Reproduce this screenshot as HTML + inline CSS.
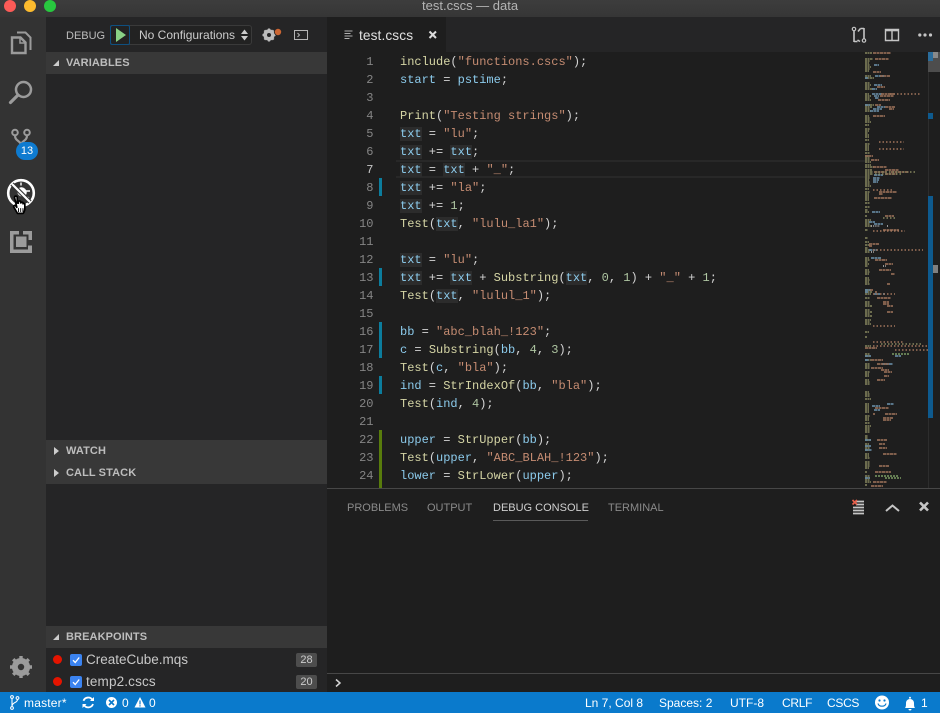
<!DOCTYPE html>
<html><head><meta charset="utf-8">
<style>
html,body{margin:0;padding:0;width:940px;height:713px;overflow:hidden;background:#1e1e1e}
*{box-sizing:border-box}
body{font-family:"Liberation Sans",sans-serif;position:relative}
svg{display:block}
.a{position:absolute}
.t{position:absolute;white-space:pre;line-height:16px}
.hd{position:absolute;left:46px;width:281px;height:22px;background:#383838;color:#bdbdbd;font:bold 11px/23px "Liberation Sans",sans-serif;padding-left:20px;letter-spacing:.1px}
.tri-d{position:absolute;left:7px;top:8px;width:0;height:0;border-style:solid;border-width:0 0 6px 6px;border-color:transparent transparent #ccc transparent}
.tri-r{position:absolute;left:8px;top:7px;width:0;height:0;border-style:solid;border-width:4px 0 4px 5px;border-color:transparent transparent transparent #ccc}
#code{position:absolute;left:400px;top:53px;width:462px;height:435px;overflow:hidden;font:12px/18px "Liberation Mono",monospace;color:#d4d4d4}
#code div{height:18px;white-space:pre}
#code div.last{height:3px;overflow:hidden}
#nums{position:absolute;left:340px;top:53px;width:33.5px;height:435px;overflow:hidden;font:12px/18px "Liberation Mono",monospace;color:#858585;text-align:right}
#nums div{height:18px}
i{font-style:normal}
.f{color:#d5d5a5}.v{color:#8ccbec}.s{color:#c58c72}.n{color:#afc6a2}
.h{background:#2c2c2c;}
.mk{position:absolute;left:379px;width:3px}
.st{position:absolute;top:693px;height:20px;line-height:20px;font-size:12px;color:#fff;white-space:pre}
.bg{position:absolute;left:296px;width:21px;height:14px;background:#4d4d4d;color:#ccc;font-size:11px;line-height:14px;text-align:center;border-radius:2px}
.cb{position:absolute;left:70px;width:12px;height:12px;background:#3b83f0;border-radius:2px}
.dot{position:absolute;left:53px;width:9px;height:9px;border-radius:50%;background:#e51400}
.pt{position:absolute;font-size:11px;line-height:16px;color:#8a8a8a;white-space:pre}
</style></head><body>

<!-- title bar -->
<div class="a" style="left:0;top:0;width:940px;height:17px;background:linear-gradient(#3d3d3d,#363636)"></div>
<div class="a" style="left:4px;top:0;width:12px;height:12px;border-radius:50%;background:#fc5b57"></div>
<div class="a" style="left:24px;top:0;width:12px;height:12px;border-radius:50%;background:#fdbc2e"></div>
<div class="a" style="left:44px;top:0;width:12px;height:12px;border-radius:50%;background:#28c83f"></div>
<div class="t" style="left:422px;top:-2px;font-size:13px;color:#b4b4b4;line-height:16px">test.cscs — data</div>

<!-- activity bar -->
<div class="a" style="left:0;top:17px;width:46px;height:675px;background:#333"></div>
<svg class="a" style="left:0;top:17px" width="46" height="675" viewBox="0 17 46 675" fill="none">
 <!-- files -->
 <path d="M17 32.500h8.500l5 5V50" stroke="#9b9b9b" stroke-width="2"/>
 <path d="M12 37.500h8.500l5 5v10.500H12z" stroke="#9b9b9b" stroke-width="2.400" fill="#333"/>
 <path d="M20 37.500v5.500h5.500" stroke="#9b9b9b" stroke-width="1.500"/>
 <!-- search -->
 <circle cx="23.500" cy="89.500" r="7.500" stroke="#9b9b9b" stroke-width="2.500"/>
 <path d="M17.500 95.500 10.500 102.500" stroke="#9b9b9b" stroke-width="3.200" stroke-linecap="round"/>
 <!-- scm -->
 <circle cx="15" cy="132.500" r="2.800" stroke="#9b9b9b" stroke-width="2"/>
 <circle cx="27" cy="132.500" r="2.800" stroke="#9b9b9b" stroke-width="2"/>
 <path d="M15 135.500c0 6 6 5 6 10M27 135.500c0 6-6 5-6 10" stroke="#9b9b9b" stroke-width="2.200"/>
 <!-- debug -->
 <circle cx="21" cy="193" r="12.800" stroke="#fff" stroke-width="2.600" fill="#333"/>
 <path d="M21 185.500v-3M26 191h4M25 196l4 2M16.500 187l-2-2" stroke="#fff" stroke-width="1.400"/>
 <ellipse cx="22" cy="192" rx="4.500" ry="5" fill="#fff" transform="rotate(-45 22 192)"/>
 <path d="M12 184 30 202" stroke="#333" stroke-width="4.400"/>
 <path d="M12 184 30 202" stroke="#fff" stroke-width="2.200"/>
 <!-- hand cursor -->
 <g transform="translate(-4.500,-21.500) scale(1.120)">
 <path d="M17 195.500c0-1.600 2.400-1.600 2.400 0v5l1 .1v-1.200c0-1 2-1 2.100 0l.1 1c.3-.9 2-.8 2 .2l0 .6c.4-.6 1.600-.4 1.600.5v4c0 1.500-.8 3-1.400 4h-5.200l-3.100-5.400c-.8-1.200.8-2.300 1.600-1.200l.9 1.200z" fill="#fff" stroke="#000" stroke-width="1.500" stroke-linejoin="round"/>
 <path d="M20.500 205v3.500M22.500 205v3.500M24.500 205v3.500" stroke="#000" stroke-width=".8"/>
 </g>
 <!-- extensions -->
 <path d="M10 231h9v3.500h-5.500v15H28v-4h4V253H10z" fill="#9b9b9b"/>
 <path d="M23 231h9v9h-3.500v-5.500H23z" fill="#9b9b9b"/>
 <rect x="16" y="236.500" width="10.500" height="10.500" fill="#9b9b9b"/>
 <!-- gear -->
 <circle cx="21" cy="667" r="6.800" stroke="#9b9b9b" stroke-width="4.500"/>
 <path d="M21 656v22M10 667h22M13.200 659.200l15.600 15.600M28.800 659.200l-15.600 15.600" stroke="#9b9b9b" stroke-width="3.400"/>
 <circle cx="21" cy="667" r="3.200" fill="#333"/>
</svg>
<div class="a" style="left:16px;top:142px;width:22px;height:18px;border-radius:9px;background:#0e7bd0;color:#fff;font-size:11px;line-height:18px;text-align:center">13</div>

<!-- sidebar -->
<div class="a" style="left:46px;top:17px;width:281px;height:675px;background:#252526"></div>
<div class="t" style="left:66px;top:28px;font-size:11px;color:#bcbcbc">DEBUG</div>
<div class="a" style="left:110px;top:25px;width:142px;height:20px;border:1px solid #3a3a3a;border-radius:3px;background:#222"></div>
<div class="a" style="left:110px;top:25px;width:20px;height:20px;border:1px solid #0e4f7f;border-radius:2px"></div>
<svg class="a" style="left:110px;top:25px" width="20" height="20"><path d="M6 3v14l10-7z" fill="#89d185"/></svg>
<div class="t" style="left:139px;top:27px;font-size:12px;color:#ccc">No Configurations</div>
<svg class="a" style="left:240px;top:29px" width="10" height="12"><path d="M1 5 4.500 .5 8 5zM1 7l3.500 4.500L8 7z" fill="#ccc"/></svg>
<svg class="a" style="left:260px;top:26px" width="24" height="18" fill="none">
 <circle cx="9" cy="9" r="4.200" stroke="#bcbcbc" stroke-width="3"/>
 <path d="M9 2.500v13M2.500 9h13M4.400 4.400l9.200 9.200M13.600 4.400l-9.200 9.200" stroke="#bcbcbc" stroke-width="2.200"/>
 <circle cx="9" cy="9" r="2" fill="#252526"/>
 <circle cx="18" cy="6" r="4" fill="#252526"/><circle cx="18" cy="6" r="3.200" fill="#cc6633"/>
</svg>
<svg class="a" style="left:294px;top:29px" width="15" height="12" fill="none"><rect x=".5" y="1.500" width="13" height="9" stroke="#b5b5b5"/><path d="M3.500 4l2 2-2 2" stroke="#b5b5b5"/></svg>

<div class="hd" style="top:52px"><span class="tri-d"></span>VARIABLES</div>
<div class="hd" style="top:440px"><span class="tri-r"></span>WATCH</div>
<div class="hd" style="top:462px"><span class="tri-r"></span>CALL STACK</div>
<div class="hd" style="top:626px"><span class="tri-d"></span>BREAKPOINTS</div>

<div class="dot" style="top:655px"></div>
<div class="cb" style="top:654px"></div>
<svg class="a" style="left:70px;top:654px" width="12" height="12" fill="none"><path d="M3 6.200 5.200 8.500 9.200 3.500" stroke="#fff" stroke-width="1.300"/></svg>
<div class="t" style="left:86px;top:652px;font-size:13.500px;color:#c8c8c8">CreateCube.mqs</div>
<div class="bg" style="top:653px">28</div>
<div class="dot" style="top:677px"></div>
<div class="cb" style="top:676px"></div>
<svg class="a" style="left:70px;top:676px" width="12" height="12" fill="none"><path d="M3 6.200 5.200 8.500 9.200 3.500" stroke="#fff" stroke-width="1.300"/></svg>
<div class="t" style="left:86px;top:674px;font-size:13.500px;letter-spacing:.15px;color:#c8c8c8">temp2.cscs</div>
<div class="bg" style="top:675px">20</div>

<!-- tab bar -->
<div class="a" style="left:327px;top:17px;width:613px;height:35px;background:#252526"></div>
<div class="a" style="left:327px;top:17px;width:119px;height:35px;background:#1e1e1e"></div>
<svg class="a" style="left:344px;top:30px" width="10" height="10" fill="none"><path d="M.5 1h8M.5 3.500h6M.5 6h8M.5 8.500h5" stroke="#b0b0b0" stroke-width="1"/></svg>
<div class="t" style="left:359px;top:28px;font-size:13.700px;letter-spacing:.1px;color:#e0e0e0">test.cscs</div>
<svg class="a" style="left:428px;top:30px" width="10" height="10" fill="none"><path d="M1.500 1.500l6.500 6.500M8 1.500 1.500 8" stroke="#ddd" stroke-width="2"/></svg>
<svg class="a" style="left:850px;top:25px" width="50" height="20" fill="none">
 <circle cx="4" cy="4" r="1.700" stroke="#c5c5c5" stroke-width="1.200"/>
 <circle cx="14" cy="15.500" r="1.700" stroke="#c5c5c5" stroke-width="1.200"/>
 <path d="M4 6v11M14 13.500V3M8 6.500l2.500-3M10.500 3.500H14M10 16.500 7.500 15M4 16.500H7.500" stroke="#c5c5c5" stroke-width="1.600"/>
 <path d="M35.500 4.500h13v11h-13zM42 4.500v11" stroke="#c5c5c5" stroke-width="1.400"/>
 <path d="M35.500 5.300h13" stroke="#c5c5c5" stroke-width="2"/>
</svg>
<svg class="a" style="left:918px;top:30px" width="18" height="10"><circle cx="1.800" cy="5" r="1.600" fill="#c5c5c5"/><circle cx="7" cy="5" r="1.600" fill="#c5c5c5"/><circle cx="12.500" cy="5" r="1.600" fill="#c5c5c5"/></svg>

<!-- editor -->
<div class="a" style="left:327px;top:52px;width:613px;height:436px;background:#1e1e1e"></div>
<div class="a" style="left:396px;top:160px;width:469px;height:18px;border-top:2px solid #282828;border-bottom:2px solid #282828"></div>
<div class="mk" style="top:178px;height:18px;background:#0c7d9d"></div>
<div class="mk" style="top:268px;height:18px;background:#0c7d9d"></div>
<div class="mk" style="top:322px;height:36px;background:#0c7d9d"></div>
<div class="mk" style="top:376px;height:18px;background:#0c7d9d"></div>
<div class="mk" style="top:430px;height:58px;background:#587c0c"></div>

<div id="nums"><div>1</div><div>2</div><div>3</div><div>4</div><div>5</div><div>6</div><div style="color:#c6c6c6">7</div><div>8</div><div>9</div><div>10</div><div>11</div><div>12</div><div>13</div><div>14</div><div>15</div><div>16</div><div>17</div><div>18</div><div>19</div><div>20</div><div>21</div><div>22</div><div>23</div><div>24</div></div>

<div id="code"><div><i class="f">include</i>(<i class="s">"functions.cscs"</i>);</div><div><i class="v">start</i> = <i class="v">pstime</i>;</div><div></div><div><i class="f">Print</i>(<i class="s">"Testing strings"</i>);</div><div><i class="v h">txt</i> = <i class="s">"lu"</i>;</div><div><i class="v h">txt</i> += <i class="v h">txt</i>;</div><div><i class="v h">txt</i> = <i class="v h">txt</i> + <i class="s">"_"</i>;</div><div><i class="v h">txt</i> += <i class="s">"la"</i>;</div><div><i class="v h">txt</i> += <i class="n">1</i>;</div><div><i class="f">Test</i>(<i class="v h">txt</i>, <i class="s">"lulu_la1"</i>);</div><div></div><div><i class="v h">txt</i> = <i class="s">"lu"</i>;</div><div><i class="v h">txt</i> += <i class="v h">txt</i> + <i class="f">Substring</i>(<i class="v h">txt</i>, <i class="n">0</i>, <i class="n">1</i>) + <i class="s">"_"</i> + <i class="n">1</i>;</div><div><i class="f">Test</i>(<i class="v h">txt</i>, <i class="s">"lulul_1"</i>);</div><div></div><div><i class="v">bb</i> = <i class="s">"abc_blah_!123"</i>;</div><div><i class="v">c</i> = <i class="f">Substring</i>(<i class="v">bb</i>, <i class="n">4</i>, <i class="n">3</i>);</div><div><i class="f">Test</i>(<i class="v">c</i>, <i class="s">"bla"</i>);</div><div><i class="v">ind</i> = <i class="f">StrIndexOf</i>(<i class="v">bb</i>, <i class="s">"bla"</i>);</div><div><i class="f">Test</i>(<i class="v">ind</i>, <i class="n">4</i>);</div><div></div><div><i class="v">upper</i> = <i class="f">StrUpper</i>(<i class="v">bb</i>);</div><div><i class="f">Test</i>(<i class="v">upper</i>, <i class="s">"ABC_BLAH_!123"</i>);</div><div><i class="v">lower</i> = <i class="f">StrLower</i>(<i class="v">upper</i>);</div><div class="last"><i class="f">Test</i>(<i class="v">lower</i>, <i class="s">"abc_blah_!123"</i>);</div></div>

<!-- minimap -->
<svg class="a" style="left:865px;top:52px" width="63" height="436" fill="none" stroke-width="1.600">
 <path stroke="#85855f" stroke-dasharray="2 .5" d="M0 1h7M0 7h8M0 9h5M0 11h4M0 13h5M0 15h6M0 17h5M0 19h4M0 24h6M0 26h9M0 31h5M0 33h6M0 35h5M0 37h8M0 42h4M0 44h6M0 46h5M0 48h6M0 53h9M0 55h7M0 57h5M0 59h6M0 64h4M0 66h5M0 68h5M0 70h6M0 73h4M0 77h5M0 79h4M0 81h3M0 83h4M0 85h4M0 88h4M0 92h5M0 94h4M0 96h4M0 98h4M0 101h5M0 104h4M0 106h5M0 108h5M0 110h6M0 113h6M0 115h9M0 118h7M0 120h8M0 122h8M0 124h5M0 126h5M0 128h4M0 130h5M0 132h5M0 134h6M0 137h4M0 140h5M0 142h4M0 144h4M0 146h4M0 148h4M0 151h5M0 155h5M0 158h3M0 160h4M0 164h2M0 168h6M0 170h4M0 172h5M0 174h6M0 178h3M0 186h3M0 190h4M0 193h5M0 196h3M0 198h6M0 200h5M0 206h4M0 208h5M0 210h3M0 212h4M0 214h3M0 218h4M0 220h5M0 222h4M0 226h4M0 228h5M0 230h4M0 232h5M0 238h5M0 240h7M0 242h6M0 246h5M0 250h5M0 252h5M0 254h7M0 258h5M0 260h7M0 262h5M0 264h7M0 268h6M0 270h5M0 272h6M0 280h4M0 285h2M0 294h6M0 302h5M0 304h5M0 308h6M0 312h5M0 314h5M0 316h5M0 320h5M0 322h4M0 324h4M0 328h4M0 330h5M0 332h5M0 340h4M0 342h5M0 344h5M0 347h6M0 352h4M0 354h4M0 356h4M0 358h4M0 360h4M0 364h5M0 366h4M0 368h4M0 371h5M0 374h6M0 376h5M0 378h5M0 380h5M0 384h3M0 386h3M0 388h6M0 392h4M0 394h4M0 396h5M0 398h4M0 402h4M0 404h4M0 406h5M0 410h5M0 412h5M0 414h5M0 416h4M0 420h2M0 424h5M0 426h5M0 428h5M0 430h6M0 433h2"/>
 <path stroke="#6d93ad" stroke-dasharray="3 .5" d="M9 13h5M10 24h9M0 26h3M9 33h8M7 37h5M7 42h10M9 44h5M10 46h4M0 53h5M12 55h8M8 57h9M5 59h9M9 123h9M8 126h7M8 128h6M8 130h5M7 160h8M4 170h6M9 172h9M4 198h8M6 206h10M0 238h6M0 240h3M9 242h6M18 242h2M0 304h6M30 304h6M0 308h4M17 312h11M22 352h7M7 354h8M9 358h6M0 388h6M0 394h6M0 398h7M0 426h5"/>
 <path stroke="#a0755c" stroke-dasharray="3 .5" d="M8 1h18M10 7h14M8 20h8M15 24h10M12 35h8M16 42h14M15 44h14M13 48h12M10 53h6M20 55h10M24 57h5M8 64h12M0 104h8M6 108h8M9 120h12M26 120h18M8 115h14M20 118h14M20 122h12M14 140h18M14 142h4M9 146h18M20 164h9M18 178h16M4 192h10M4 194h3M10 208h12M14 218h12M20 212h8M26 222h4M5 238h3M22 232h3M10 240h2M12 246h14M18 250h6M18 252h6M22 254h6M22 260h6M0 296h12M6 308h12M12 312h12M6 316h12M16 318h8M19 320h8M19 324h5M12 328h8M10 356h14M8 362h2M20 362h12M18 366h10M18 368h8M12 388h10M14 392h6M14 396h8M18 402h14M14 414h10M10 420h16M8 430h14M6 434h12"/>
 <path stroke="#7b9c63" stroke-dasharray="2 1" d="M27 302h18M10 424h24M20 426h16"/>
 <path stroke="#bdbdbd" stroke-dasharray="1 1.200" d="M6 174h9M22 174h2M18 214h3M6 200h3"/>
 <path stroke="#a0755c" stroke-dasharray="1.500 2" d="M25 42h30M14 90h25M14 97h25M8 138h20M8 179h32M8 198h50M8 242h22M8 294h55M30 298h33M8 274h22M8 290h30"/>
 <path stroke="#85855f" stroke-dasharray="1.500 2" d="M10 120h40M10 122h26M18 166h12M16 292h40"/>
</svg>

<!-- overview ruler + scrollbar -->
<div class="a" style="left:928px;top:52px;width:1px;height:436px;background:#2d2d2d"></div>
<div class="a" style="left:928px;top:52px;width:12px;height:20px;background:#4d4d4d"></div>
<div class="a" style="left:928px;top:52px;width:5px;height:9px;background:#2b6d9c"></div>
<div class="a" style="left:933px;top:52px;width:5px;height:6px;background:#8a8a8a"></div>
<div class="a" style="left:928px;top:113px;width:5px;height:6px;background:#0e5a8e"></div>
<div class="a" style="left:928px;top:196px;width:5px;height:222px;background:#0e5a8e"></div>
<div class="a" style="left:933px;top:265px;width:5px;height:8px;background:#808080"></div>

<!-- panel -->
<div class="a" style="left:327px;top:488px;width:613px;height:204px;background:#1e1e1e;border-top:1px solid #474747"></div>
<div class="pt" style="left:347px;top:500px">PROBLEMS</div>
<div class="pt" style="left:427px;top:500px">OUTPUT</div>
<div class="pt" style="left:493px;top:500px;color:#d0d0d0">DEBUG CONSOLE</div>
<div class="a" style="left:493px;top:520px;width:95px;height:1px;background:#5a5a5a"></div>
<div class="pt" style="left:608px;top:500px">TERMINAL</div>
<svg class="a" style="left:850px;top:498px" width="82" height="18" fill="none">
 <path d="M6 3.500h8M6 6.500h8M3 9.500h11M3 12.500h11M3 15.500h11" stroke="#c5c5c5" stroke-width="1.700"/>
 <path d="M2.500 2 7 6.500M7 2 2.500 6.500" stroke="#e8604c" stroke-width="1.700"/>
 <path d="M36 13l6.500-5.500L49 13" stroke="#c5c5c5" stroke-width="2"/>
 <path d="M70 4.500l8 8M78 4.500l-8 8" stroke="#c5c5c5" stroke-width="2.600"/>
</svg>
<div class="a" style="left:327px;top:673px;width:613px;height:1px;background:#474747"></div>
<svg class="a" style="left:334px;top:678px" width="10" height="10" fill="none"><path d="M2 1.500 6 5 2 8.500" stroke="#d4d4d4" stroke-width="1.500"/></svg>

<!-- status bar -->
<div class="a" style="left:0;top:692px;width:940px;height:21px;background:#0a7acc"></div>
<svg class="a" style="left:10px;top:694px" width="160" height="18" fill="none">
 <circle cx="2" cy="3" r="1.400" stroke="#fff"/><circle cx="2" cy="14" r="1.400" stroke="#fff"/><circle cx="7.500" cy="4" r="1.400" stroke="#fff"/>
 <path d="M2 4.500v8M7.500 5.500C7.500 9 2.500 8 2 12" stroke="#fff" stroke-width="1.100"/>
 <path d="M73.500 6.800A5 5 0 0 1 82.500 6M83 10A5 5 0 0 1 74 11" stroke="#fff" stroke-width="1.800"/>
 <path d="M84 3v4h-4zM72.500 14v-4h4z" fill="#fff"/>
 <circle cx="101.500" cy="8.500" r="5.500" fill="#fff"/>
 <path d="M99 6l5 5M104 6l-5 5" stroke="#0a7acc" stroke-width="1.600"/>
 <path d="M130 3l5.500 10.500h-11z" fill="#fff"/>
 <path d="M130 6.500v4M130 11.300v1.200" stroke="#0a7acc" stroke-width="1.200"/>
</svg>
<div class="st" style="left:24px;letter-spacing:.2px">master*</div>
<div class="st" style="left:122px">0</div>
<div class="st" style="left:149px">0</div>
<div class="st" style="left:585px">Ln 7, Col 8</div>
<div class="st" style="left:659px">Spaces: 2</div>
<div class="st" style="left:730px">UTF-8</div>
<div class="st" style="left:782px;letter-spacing:-.3px">CRLF</div>
<div class="st" style="left:827px;letter-spacing:-.3px">CSCS</div>
<svg class="a" style="left:874px;top:694px" width="50" height="18" fill="none">
 <circle cx="8" cy="8.500" r="7" fill="#fff"/>
 <circle cx="5.500" cy="6.500" r="1.100" fill="#0a7acc"/><circle cx="10.500" cy="6.500" r="1.100" fill="#0a7acc"/>
 <path d="M4 9.500c1 3.600 7 3.600 8 0" stroke="#0a7acc" stroke-width="1.200"/>
 <path d="M31 14c.7-1 1-1.500 1-5 0-2.500 2-4 4-4s4 1.500 4 4c0 3.500.3 4 1 5z" fill="#fff"/>
 <circle cx="36" cy="3.800" r="1" fill="#fff"/><path d="M34.500 15a1.500 1.500 0 0 0 3 0z" fill="#fff"/>
</svg>
<div class="st" style="left:921px">1</div>
</body></html>
